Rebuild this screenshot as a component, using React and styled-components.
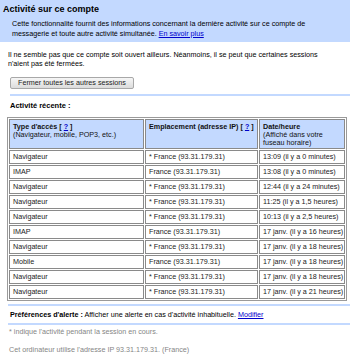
import React from "react";
import styled, { createGlobalStyle } from "styled-components";

const Global = createGlobalStyle`
  html, body { margin: 0; padding: 0; background: #fff; }
  body { font-family: "Liberation Sans", Arial, sans-serif; color: #000; overflow: hidden; }
`;

const Page = styled.div`
  width: 350px;
  height: 359px;
  overflow: hidden;
`;

const Band = styled.div`
  background: #c3d9ff;
  padding: 4px 0 4px 3px;
`;

const Title = styled.div`
  font-size: 9px;
  font-weight: bold;
  line-height: 10px;
`;

const Desc = styled.div`
  margin: 5px 0 0 9px;
  font-size: 7.2px;
  line-height: 9.5px;
  width: 320px;
`;

const Link = styled.a`
  color: #0000cc;
  text-decoration: underline;
  cursor: pointer;
`;

const Content = styled.div`
  padding-left: 8px;
`;

const Para = styled.p`
  margin: 8px 0 0 0;
  font-size: 7.2px;
  line-height: 9px;
  width: 320px;
`;

const Button = styled.button`
  margin: 9px 0 0 2px;
  height: 12px;
  padding: 0 7px;
  font-family: "Liberation Sans", Arial, sans-serif;
  font-size: 7.2px;
  line-height: 10px;
  color: #222;
  border: 1px solid #a8a8a8;
  border-radius: 2px;
  background: linear-gradient(#f6f6f6, #dcdcdc);
  display: block;
`;

const Rule = styled.div`
  height: 2px;
  background: #c3d9ff;
  margin: ${(p) => p.$m || "5px 0 0 2px"};
`;

const Heading = styled.div`
  margin: 5px 0 0 2px;
  font-size: 7.5px;
  font-weight: bold;
  line-height: 10px;
`;

const Table = styled.table`
  margin: 6px 0 0 -1px;
  width: 340px;
  border-collapse: separate;
  border-spacing: 1px;
  border: 1px solid #9a9a9a;
  font-size: 7.2px;
  table-layout: fixed;
`;

const Th = styled.th`
  background: #c3d9ff;
  border: 1px solid #8a8a8a;
  padding: 3px 3px 1px 3px;
  text-align: left;
  vertical-align: top;
  font-weight: bold;
  line-height: 7.8px;
  height: 24px;
  color: #111;
`;

const Sub = styled.span`
  font-weight: normal;
`;

const Td = styled.td`
  border: 1px solid #8a8a8a;
  padding: 2px 3px;
  line-height: 8px;
  height: 8px;
  color: #222;
  white-space: nowrap;
  overflow: hidden;
`;

const Prefs = styled.div`
  margin: 4px 0 0 2px;
  font-size: 7.2px;
  line-height: 10px;
`;

const Bold = styled.b``;

const Note = styled.div`
  margin: ${(p) => p.$m || "2px 0 0 1px"};
  font-size: 7.2px;
  line-height: 10px;
  color: #858585;
`;

const rows = [
  ["Navigateur", "* France (93.31.179.31)", "13:09 (il y a 0 minutes)"],
  ["IMAP", "France (93.31.179.31)", "13:08 (il y a 0 minutes)"],
  ["Navigateur", "* France (93.31.179.31)", "12:44 (il y a 24 minutes)"],
  ["Navigateur", "* France (93.31.179.31)", "11:25 (il y a 1,5 heures)"],
  ["Navigateur", "* France (93.31.179.31)", "10:13 (il y a 2,5 heures)"],
  ["IMAP", "France (93.31.179.31)", "17 janv. (il y a 16 heures)"],
  ["Navigateur", "* France (93.31.179.31)", "17 janv. (il y a 18 heures)"],
  ["Mobile", "France (93.31.179.31)", "17 janv. (il y a 18 heures)"],
  ["Navigateur", "* France (93.31.179.31)", "17 janv. (il y a 18 heures)"],
  ["Navigateur", "* France (93.31.179.31)", "17 janv. (il y a 21 heures)"],
];

export default function App() {
  return (
    <Page>
      <Global />
      <Band>
        <Title>Activité sur ce compte</Title>
        <Desc>
          Cette fonctionnalité fournit des informations concernant la dernière activité sur ce compte de
          messagerie et toute autre activité simultanée. <Link>En savoir plus</Link>
        </Desc>
      </Band>
      <Content>
        <Para>
          Il ne semble pas que ce compte soit ouvert ailleurs. Néanmoins, il se peut que certaines sessions
          n'aient pas été fermées.
        </Para>
        <Button>Fermer toutes les autres sessions</Button>
        <Rule />
        <Heading>Activité récente :</Heading>
        <Table>
          <colgroup>
            <col style={{ width: 135 }} />
            <col style={{ width: 113 }} />
            <col />
          </colgroup>
          <thead>
            <tr>
              <Th>
                Type d'accès [ <Link>?</Link> ]
                <br />
                <Sub>(Navigateur, mobile, POP3, etc.)</Sub>
              </Th>
              <Th>
                Emplacement (adresse IP) [ <Link>?</Link> ]
              </Th>
              <Th>
                Date/heure
                <br />
                <Sub>
                  (Affiché dans votre
                  <br />
                  fuseau horaire)
                </Sub>
              </Th>
            </tr>
          </thead>
          <tbody>
            {rows.map((r, i) => (
              <tr key={i}>
                <Td>{r[0]}</Td>
                <Td>{r[1]}</Td>
                <Td>{r[2]}</Td>
              </tr>
            ))}
          </tbody>
        </Table>
        <Rule $m="3px 0 0 0" />
        <Prefs>
          <Bold>Préférences d'alerte :</Bold> Afficher une alerte en cas d'activité inhabituelle.{" "}
          <Link>Modifier</Link>
        </Prefs>
        <Rule $m="3px 0 0 0" />
        <Note>* indique l'activité pendant la session en cours.</Note>
        <Note $m="8px 0 0 1px">Cet ordinateur utilise l'adresse IP 93.31.179.31. (France)</Note>
      </Content>
    </Page>
  );
}
